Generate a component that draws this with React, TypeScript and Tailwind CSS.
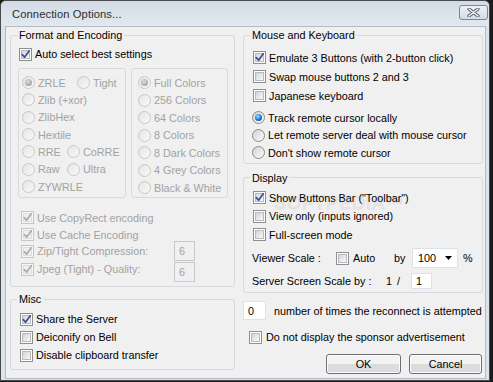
import type { ReactNode } from "react";

const FONT = "font-['Liberation_Sans',Arial,sans-serif]";

function Check({ checked = false, disabled = false }: { checked?: boolean; disabled?: boolean }) {
  return (
    <span
      className={`flex h-[13px] w-[13px] shrink-0 items-center justify-center border ${
        disabled ? "border-[#c6c6c6] bg-[#f6f6f6]" : "border-[#8e8f8f] bg-white"
      }`}
    >
      <span
        className={`relative flex h-[9px] w-[9px] items-center justify-center border ${
          disabled
            ? "border-[#dddddd] bg-[#efefef]"
            : "border-[#b7bbc1] bg-gradient-to-br from-[#d3d6da] to-[#f8f8f8]"
        }`}
      >
        {checked && (
          <svg className="absolute -left-[1px] -top-[1px] h-[9px] w-[9px] overflow-visible" viewBox="0 0 9 9">
            <path
              d="M1.2 4.6 L3.6 7.2 L8.2 0.8"
              fill="none"
              stroke={disabled ? "#ababab" : "#3a4f95"}
              strokeWidth={1.7}
              strokeLinecap="round"
              strokeLinejoin="round"
            />
          </svg>
        )}
      </span>
    </span>
  );
}

function Radio({ checked = false, disabled = false }: { checked?: boolean; disabled?: boolean }) {
  return (
    <span
      className={`flex h-[13px] w-[13px] shrink-0 items-center justify-center rounded-full border ${
        disabled
          ? "border-[#c8c8c8] bg-gradient-to-br from-[#e4e4e4] to-[#fafafa]"
          : "border-[#8b8b8b] bg-gradient-to-br from-[#d0d3d7] to-[#fcfcfc]"
      }`}
    >
      {checked && (
        <span
          className={`h-[7px] w-[7px] rounded-full ${
            disabled
              ? "bg-[radial-gradient(circle_at_40%_35%,#dedede,#8e8e8e)]"
              : "bg-[radial-gradient(circle_at_40%_35%,#9ee6ff,#1c74cc_55%,#0a3c80)]"
          }`}
        />
      )}
    </span>
  );
}

function Item({
  kind,
  label,
  checked,
  disabled,
  className = "",
}: {
  kind: "check" | "radio";
  label: string;
  checked?: boolean;
  disabled?: boolean;
  className?: string;
}) {
  return (
    <div className={`flex items-center gap-[3px] ${className}`}>
      {kind === "check" ? <Check checked={checked} disabled={disabled} /> : <Radio checked={checked} disabled={disabled} />}
      <span className={`whitespace-nowrap ${disabled ? "text-[#a2a2a2]" : "text-black"}`}>{label}</span>
    </div>
  );
}

function Group({ title, className = "", children }: { title?: string; className?: string; children: ReactNode }) {
  return (
    <fieldset className={`rounded-[3px] border border-[#d5dbe0] px-[6px] ${className}`}>
      {title && <legend className="px-[2px] leading-[14px]">{title}</legend>}
      {children}
    </fieldset>
  );
}

function Box({ value, disabled = false, className = "" }: { value: string; disabled?: boolean; className?: string }) {
  return (
    <div
      className={`flex items-center border pl-[4px] ${
        disabled ? "border-[#c9c9c9] bg-[#f0f0f0] text-[#a2a2a2]" : "border-[#dce2e8] bg-white text-black"
      } ${className}`}
    >
      {value}
    </div>
  );
}

function Button({ label, className = "" }: { label: string; className?: string }) {
  return (
    <button
      type="button"
      className={`flex h-[20px] items-center justify-center rounded-[3px] border border-[#707070] bg-gradient-to-b from-[#f3f3f3] from-50% to-[#dcdcdc] to-50% shadow-[inset_0_0_0_1px_#fcfcfc] ${className}`}
    >
      {label}
    </button>
  );
}

export default function App() {
  return (
    <div className={`h-[382px] w-[493px] bg-[#1b1b1b] text-[10.8px] leading-[14px] ${FONT}`}>
      <div className="flex h-[381px] w-[490px] flex-col rounded-t-[6px] border border-[#4a4a4a] bg-[#dbe3eb]">
        <div className="flex h-[25px] shrink-0 items-center rounded-t-[5px] bg-gradient-to-b from-[#d3dce6] to-[#e1e8ef] pl-[11px]">
          <span className="text-[11.2px] tracking-[0.1px] text-[#2e2e2e]">Connection Options...</span>
          <div className="ml-auto mr-[1px] mt-[4px] flex h-[15px] w-[29px] items-center justify-center self-start rounded-[3px] border border-[#7d8894] bg-gradient-to-b from-[#eef2f6] to-[#d3dbe4]">
            <svg width="13" height="9" viewBox="0 0 13 9">
              <path d="M2 1 L11 8 M11 1 L2 8" stroke="#4a5561" strokeWidth={3.2} strokeLinecap="round" />
              <path d="M2 1 L11 8 M11 1 L2 8" stroke="#ffffff" strokeWidth={1.4} strokeLinecap="round" />
            </svg>
          </div>
        </div>

        <div className="ml-[4px] flex h-[353px] w-[481px] gap-[8px] border border-[#b3bcc6] bg-[#f0f0f0] pl-[4px]">
          {/* left column */}
          <div className="flex w-[225px] flex-col">
            <Group title="Format and Encoding" className="mt-[1px] pb-[4px]">
              <Item kind="check" label="Auto select best settings" checked className="ml-[2px] mt-[4px] h-[16px]" />
              <div className="ml-[1px] mt-[6px] flex gap-[5px]">
                <div className="h-[130px] w-[108px] rounded-[3px] border border-[#d5dbe0] pl-[3px] pt-[5px]">
                  <div className="flex h-[17.33px] items-center">
                    <Item kind="radio" label="ZRLE" checked disabled className="w-[55px]" />
                    <Item kind="radio" label="Tight" disabled />
                  </div>
                  <Item kind="radio" label="Zlib (+xor)" disabled className="h-[17.33px]" />
                  <Item kind="radio" label="ZlibHex" disabled className="h-[17.33px]" />
                  <Item kind="radio" label="Hextile" disabled className="h-[17.33px]" />
                  <div className="flex h-[17.33px] items-center">
                    <Item kind="radio" label="RRE" disabled className="w-[45px]" />
                    <Item kind="radio" label="CoRRE" disabled />
                  </div>
                  <div className="flex h-[17.33px] items-center">
                    <Item kind="radio" label="Raw" disabled className="w-[45px]" />
                    <Item kind="radio" label="Ultra" disabled />
                  </div>
                  <Item kind="radio" label="ZYWRLE" disabled className="h-[17.33px]" />
                </div>
                <div className="h-[130px] w-[97px] rounded-[3px] border border-[#d5dbe0] pl-[6px] pt-[5px]">
                  <Item kind="radio" label="Full Colors" checked disabled className="h-[17.5px]" />
                  <Item kind="radio" label="256 Colors" disabled className="h-[17.5px]" />
                  <Item kind="radio" label="64 Colors" disabled className="h-[17.5px]" />
                  <Item kind="radio" label="8 Colors" disabled className="h-[17.5px]" />
                  <Item kind="radio" label="8 Dark Colors" disabled className="h-[17.5px]" />
                  <Item kind="radio" label="4 Grey Colors" disabled className="h-[17.5px]" />
                  <Item kind="radio" label="Black & White" disabled className="h-[17.5px]" />
                </div>
              </div>
              <Item kind="check" label="Use CopyRect encoding" checked disabled className="ml-[4px] mt-[11px] h-[17px]" />
              <Item kind="check" label="Use Cache Encoding" checked disabled className="ml-[4px] h-[17px]" />
              <div className="-mt-[2px] ml-[4px] flex h-[20px] items-start">
                <Item kind="check" label="Zip/Tight Compression:" checked disabled className="mt-[3px] h-[14px] w-[153px]" />
                <Box value="6" disabled className="h-[20px] w-[21px]" />
              </div>
              <div className="ml-[4px] mt-[1px] flex h-[20px] items-start">
                <Item kind="check" label="Jpeg (Tight) - Quality:" checked disabled className="h-[14px] w-[153px]" />
                <Box value="6" disabled className="h-[20px] w-[21px]" />
              </div>
            </Group>

            <Group title="Misc" className="mt-[5px] pb-[5px]">
              <Item kind="check" label="Share the Server" checked className="ml-[3px] mt-[4px] h-[18px]" />
              <Item kind="check" label="Deiconify on Bell" className="ml-[3px] h-[18px]" />
              <Item kind="check" label="Disable clipboard transfer" className="ml-[3px] h-[18px]" />
            </Group>
          </div>

          {/* right column */}
          <div className="flex w-[240px] flex-col">
            <Group title="Mouse and Keyboard" className="mt-[1px] pb-[1px]">
              <div className="ml-[3px] mt-[6px]">
                <Item kind="check" label="Emulate 3 Buttons (with 2-button click)" checked className="h-[19px]" />
                <Item kind="check" label="Swap mouse buttons 2 and 3" className="h-[19px]" />
                <Item kind="check" label="Japanese keyboard" className="h-[19px]" />
              </div>
              <div className="ml-[2px] mt-[4px]">
                <Item kind="radio" label="Track remote cursor locally" checked className="h-[17.5px]" />
                <Item kind="radio" label="Let remote server deal with mouse cursor" className="h-[17.5px]" />
                <Item kind="radio" label="Don't show remote cursor" className="h-[17.5px]" />
              </div>
            </Group>

            <Group title="Display" className="relative mt-[7px] pb-[3px]">
              {/* faint watermark over the panel */}
              <span className="pointer-events-none absolute left-[30px] top-[11px] text-[18px] leading-[14px] tracking-[1px] text-transparent [-webkit-text-stroke:1px_#e0e0e0]">
                SOFTPEDIA™
              </span>
              <div className="relative ml-[3px] mt-[4px]">
                <Item kind="check" label={'Show Buttons Bar ("Toolbar")'} checked className="h-[18.5px]" />
                <Item kind="check" label="View only (inputs ignored)" className="h-[18.5px]" />
                <Item kind="check" label="Full-screen mode" className="h-[18.5px]" />
              </div>
              <div className="ml-[2px] mt-[4px] flex h-[20px] items-center">
                <span className="w-[84px]">Viewer Scale :</span>
                <Item kind="check" label="Auto" className="w-[58px] gap-[4px]" />
                <span className="w-[18px]">by</span>
                <div className="flex h-[20px] w-[46px] items-center border border-[#dce2e8] bg-white pl-[5px]">
                  <span>100</span>
                  <svg className="ml-auto mr-[5px]" width="7" height="4" viewBox="0 0 7 4">
                    <polygon points="0,0 7,0 3.5,4" fill="#000" />
                  </svg>
                </div>
                <span className="ml-[5px]">%</span>
              </div>
              <div className="ml-[2px] mt-[5px] flex h-[16px] items-center">
                <span className="w-[134px]">Server Screen Scale by :</span>
                <span className="w-[11px]">1</span>
                <span className="w-[14px]">/</span>
                <Box value="1" className="h-[16px] w-[21px]" />
              </div>
            </Group>

            <div className="mt-[8px] flex h-[19px] items-center">
              <Box value="0" className="h-[19px] w-[23px]" />
              <span className="ml-[8px]">number of times the reconnect is attempted</span>
            </div>

            <Item kind="check" label="Do not display the sponsor advertisement" className="ml-[6px] mt-[9px] h-[16px] gap-[4px]" />

            <div className="mr-[1px] mt-[9px] flex justify-end gap-[8px]">
              <Button label="OK" className="w-[75px]" />
              <Button label="Cancel" className="w-[73px]" />
            </div>
          </div>
        </div>
      </div>
    </div>
  );
}
